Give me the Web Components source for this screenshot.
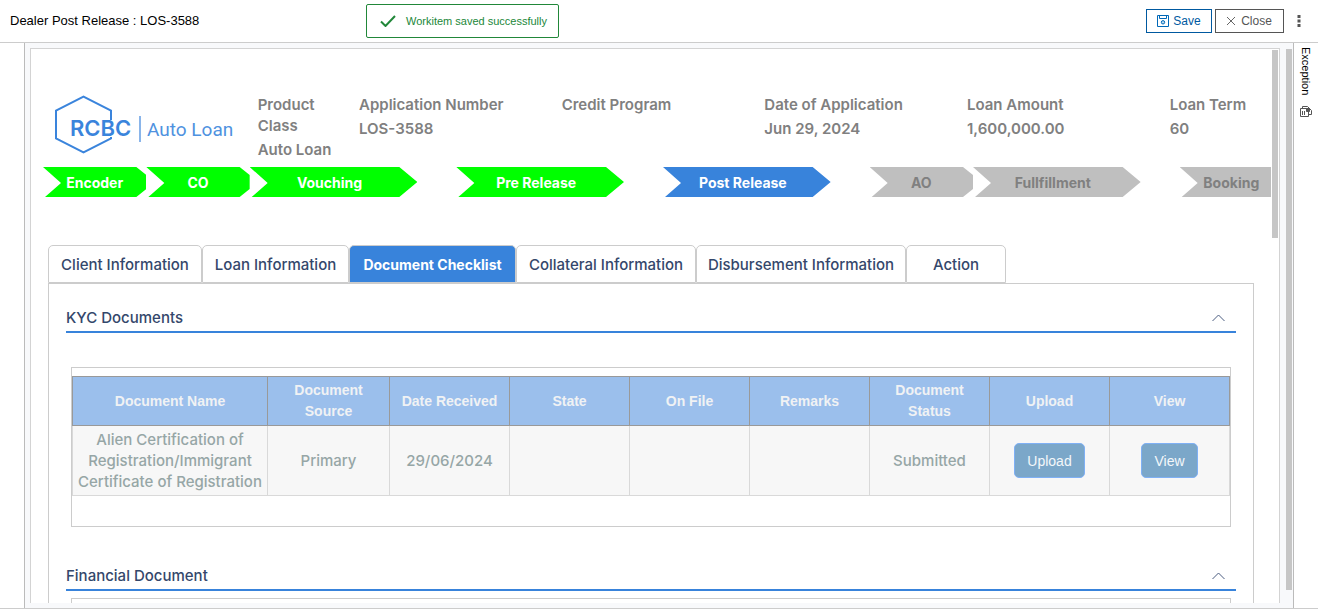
<!DOCTYPE html>
<html lang="en">
<head>
<meta charset="utf-8">
<title>Dealer Post Release</title>
<style>
html, body { margin: 0; height: 100%; background: #fff; }
body { font-family: "Liberation Sans", Arial, sans-serif; overflow: hidden; }
</style>
</head>
<body>
<los-app></los-app>
<script>
const define = (name, html, setup) => {
  const template = document.createElement('template');
  template.innerHTML = html;
  customElements.define(name, class extends HTMLElement {
    connectedCallback() {
      if (this.shadowRoot) return;
      this.attachShadow({ mode: 'open' }).append(template.content.cloneNode(true));
      if (setup) setup(this, this.shadowRoot);
    }
  });
};

define('los-topbar', `
<style>
:host { display: grid; grid-template-columns: 1fr auto 1fr; align-items: center; height: 42px; flex: none; border-bottom: 1px solid #ccc; padding: 0 15px 0 10px; font-size: 12px; color: #000; }
h1 { grid-column: 1; grid-row: 1; margin: 0; font-size: 13px; line-height: 16px; font-weight: 400; }
.toast { grid-column: 1 / 4; grid-row: 1; justify-self: start; margin-left: 356px; box-sizing: border-box; height: 34px; display: flex; align-items: center; gap: 10px; padding: 0 11px 0 13px; border: 1px solid #218739; border-radius: 2px; color: #218739; font-size: 11px; white-space: nowrap; }
.actions { grid-column: 3; grid-row: 1; display: flex; justify-content: flex-end; align-items: center; gap: 3px; }
button { box-sizing: border-box; height: 24px; display: flex; align-items: center; background: #fff; border: 1px solid #0059a0; color: #0059a0; font: 12px "Liberation Sans", Arial, sans-serif; padding: 0; justify-content: center; }
.save { width: 66px; gap: 4px; }
.close { width: 69px; gap: 6px; border-color: #555; color: #555; }
.more { border: 0; width: 8px; margin-left: 8px; }
</style>
<h1>Dealer Post Release : LOS-3588</h1>
<div class="toast" role="status"><svg width="16" height="12" viewBox="0 0 16 12" fill="none" stroke="#218739" stroke-width="2"><path d="M1 6.500l4.500 4.500L15 1"/></svg><span>Workitem saved successfully</span></div>
<div class="actions">
<button class="save"><svg width="12" height="12" viewBox="0 0 12 12" fill="none" stroke="#0068b8"><path d="M.5.5h11v11H.5z"/><path d="M2.500 1v2.500h7V1"/><circle cx="6" cy="7.300" r="1.700" fill="#b9dcf2"/></svg>Save</button>
<button class="close"><svg width="8" height="8" viewBox="0 0 8 8" stroke="#555" stroke-width=".9" fill="none"><path d="M0 0l8 8M8 0L0 8"/></svg>Close</button>
<button class="more" aria-label="More"><svg width="4" height="12" fill="#555"><path d="M.5 0h3v3h-3zM.5 4.500h3v3h-3zM.5 9h3v3h-3z"/></svg></button>
</div>`);

define('los-logo', `
<style>:host { display: block; } svg { display: block; overflow: visible; }</style>
<svg width="180" height="60" viewBox="0 0 180 60" fill="none" role="img" aria-label="RCBC Auto Loan">
<path d="M56 25V15.500L28.500 1.500 1 15.500V43.500L28.500 57.500 56 43.500V42" stroke="#3a84dc" stroke-width="2"/>
<text x="15" y="41" font-family="Inter, sans-serif" font-size="22" font-weight="600" fill="#3a84dc">RCBC</text>
<path d="M85 21v26" stroke="#8ab5ea" stroke-width="2"/>
<text x="92" y="41" font-family="Roboto, sans-serif" font-size="19" fill="#4f92e0">Auto Loan</text>
</svg>`);

define('los-field', `
<style>
:host { display: block; padding: 0 12px; font-size: 15px; line-height: 21px; color: #808080; font-weight: 600; }
.value { margin-top: 3px; white-space: nowrap; }
</style>
<div class="label"></div><div class="value"><slot></slot></div>`,
(el, root) => { root.querySelector('.label').textContent = el.getAttribute('label'); });

define('los-step', `
<style>
:host { display: block; grid-column: span 1; height: 30px; line-height: 32px; text-align: center; font-weight: 700; color: #fff; background: #0f0; white-space: nowrap;
  clip-path: polygon(0 0, calc(100% - 10px) 0, 100% 8px, 100% 22px, calc(100% - 10px) 100%, 2px 100%, 18px 16px); }
:host([wide]) { grid-column: span 2; margin-right: 39px; padding-right: 8px; clip-path: polygon(0 0, calc(100% - 18px) 0, 100% 15px, calc(100% - 18px) 100%, 2px 100%, 18px 16px); }
:host([state="current"]) { background: #3883db; }
:host([state="next"]) { background: #bfbfbf; color: #808080; }
</style><slot></slot>`);

define('los-tabs', `
<style>
:host { display: grid; grid-template-columns: 154px 147px 167px 180px 210px 100px; }
button { box-sizing: border-box; height: 38px; padding: 0; border: 1px solid #ccc; border-radius: 5px 5px 0 0; background: #fff; color: #34476b; font: 500 15px Inter, sans-serif; white-space: nowrap; }
button[aria-selected="true"] { background: #3883db; color: #fff; font-weight: 700; font-size: 14px; }
</style>
<button role="tab">Client Information</button><button role="tab">Loan Information</button><button role="tab" aria-selected="true">Document Checklist</button><button role="tab">Collateral Information</button><button role="tab">Disbursement Information</button><button role="tab">Action</button>`);

define('los-section', `
<style>
:host { display: block; }
header { box-sizing: border-box; display: flex; align-items: center; justify-content: space-between; height: 30px; padding: 1px 11px 0 0; border-bottom: 2px solid #3883db; }
h2 { margin: 0; font: 500 15px/20px Inter, sans-serif; color: #34476b; }
button { border: 0; padding: 0; background: none; display: flex; }
.box { margin: var(--box-gap, 7px) 5px 0; border: 1px solid #ccc; padding: 8px 0 30px; }
</style>
<header><h2></h2><button aria-label="Collapse"><svg width="13" height="8" viewBox="0 0 13 8" fill="none" stroke="#4a5c80"><path d="M.5 7L6.500 1l6 6"/></svg></button></header>
<div class="box"><slot></slot></div>`,
(el, root) => { root.querySelector('h2').textContent = el.getAttribute('heading'); });

define('los-documents', `
<style>
:host { display: block; }
table { width: 100%; table-layout: fixed; border-collapse: collapse; }
col.name { width: 195px; } col.source { width: 122px; }
th, td { box-sizing: border-box; padding: 0; text-align: center; line-height: 21px; }
th { height: 49px; border: 1px solid #999; background: #9bbfec; color: #f0f2f4; font: 700 14px/21px "Liberation Sans", Arial, sans-serif; }
td { height: 70px; border: 1px solid #d9d9d9; background: #f7f7f7; color: #96a6a6; font-family: Inter, sans-serif; font-size: 15px; font-weight: 500; }
button { box-sizing: border-box; display: block; margin: 0 auto; height: 35px; padding: 0 12px; border: 1px solid #7fb0f5; border-radius: 5px; background: #7ba7c9; color: #f4f7fa; font: 14px "Liberation Sans", Arial, sans-serif; }
</style>
<table>
<colgroup><col class="name"><col class="source"><col span="7"></colgroup>
<thead><tr><th>Document Name</th><th>Document<br>Source</th><th>Date Received</th><th>State</th><th>On File</th><th>Remarks</th><th>Document<br>Status</th><th>Upload</th><th>View</th></tr></thead>
<tbody><tr><td>Alien Certification of<br>Registration/Immigrant<br>Certificate of Registration</td><td>Primary</td><td>29/06/2024</td><td></td><td></td><td></td><td>Submitted</td><td><button>Upload</button></td><td><button>View</button></td></tr></tbody>
</table>`);

define('los-form', `
<style>
:host { display: block; position: relative; overflow: hidden; border: 1px solid #d3d3d3; border-bottom: 0; background: #fff; font: 14px Inter, sans-serif; }
.thumb { position: absolute; top: 1px; right: 1px; width: 6px; height: 188px; background: #c6c6c6; }
.content { margin-right: 8px; overflow: hidden; }
.summary { display: grid; grid-template-columns: repeat(12, minmax(0, 1fr)); margin: 45px 12px 0; min-height: 67px; }
.two { grid-column: span 2; }
los-logo { padding: 1px 0 0 12px; }
.steps { display: grid; grid-template-columns: repeat(12, minmax(0, 1fr)); margin: 6px -12px 48px 12px; }
.card { margin: 0 17px; }
.panel { border: 1px solid #ccc; padding: 19px 17px 30px; }
.first { --box-gap: 34px; }
.second { margin-top: 34px; }
</style>
<div class="content">
<section class="summary">
<los-logo class="two"></los-logo>
<los-field label="Product Class">Auto Loan</los-field>
<los-field class="two" label="Application Number">LOS-3588</los-field>
<los-field class="two" label="Credit Program"></los-field>
<los-field class="two" label="Date of Application">Jun 29, 2024</los-field>
<los-field class="two" label="Loan Amount">1,600,000.00</los-field>
<los-field label="Loan Term">60</los-field>
</section>
<nav class="steps">
<los-step>Encoder</los-step><los-step>CO</los-step><los-step wide>Vouching</los-step><los-step wide>Pre Release</los-step><los-step wide state="current">Post Release</los-step><los-step state="next">AO</los-step><los-step wide state="next">Fullfillment</los-step><los-step state="next">Booking</los-step>
</nav>
<div class="card">
<los-tabs role="tablist"></los-tabs>
<div class="panel">
<los-section class="first" heading="KYC Documents"><los-documents></los-documents></los-section>
<los-section class="second" heading="Financial Document"></los-section>
</div>
</div>
</div>
<div class="thumb"></div>`);

define('los-app', `
<style>
:host { display: flex; flex-direction: column; height: 100vh; }
.body { flex: 1; min-height: 0; display: flex; border-bottom: 1px solid #ccc; }
.left { flex: none; width: 24px; }
main { flex: 1; min-width: 0; display: flex; gap: 6px; background: #f8f9fb; border: solid #bbb; border-width: 0 1px; padding: 5px 1px 5px 5px; }
los-form { flex: 1; min-width: 0; }
.thumb { width: 6px; background: #c6c6c6; margin: 1px 0 13px; }
aside { flex: none; width: 24px; display: flex; flex-direction: column; align-items: center; gap: 11px; padding-top: 4px; }
aside span { writing-mode: vertical-rl; font-size: 11px; line-height: 12px; }
</style>
<los-topbar></los-topbar>
<div class="body">
<div class="left"></div>
<main><los-form></los-form><div class="thumb"></div></main>
<aside><span>Exception</span><svg width="12" height="11" viewBox="0 0 12 11" fill="none" stroke="#555"><path d="M2.500 2V.5h5L10 3M.5 2.500h6l2 2v6h-8zM2.500 5v4M4.500 5v4M9 8.500h2.500V4.500L9 2"/><path d="M6.500 2.500h3v3h-3z" fill="#555"/></svg></aside>
</div>`);
</script>
</body>
</html>
